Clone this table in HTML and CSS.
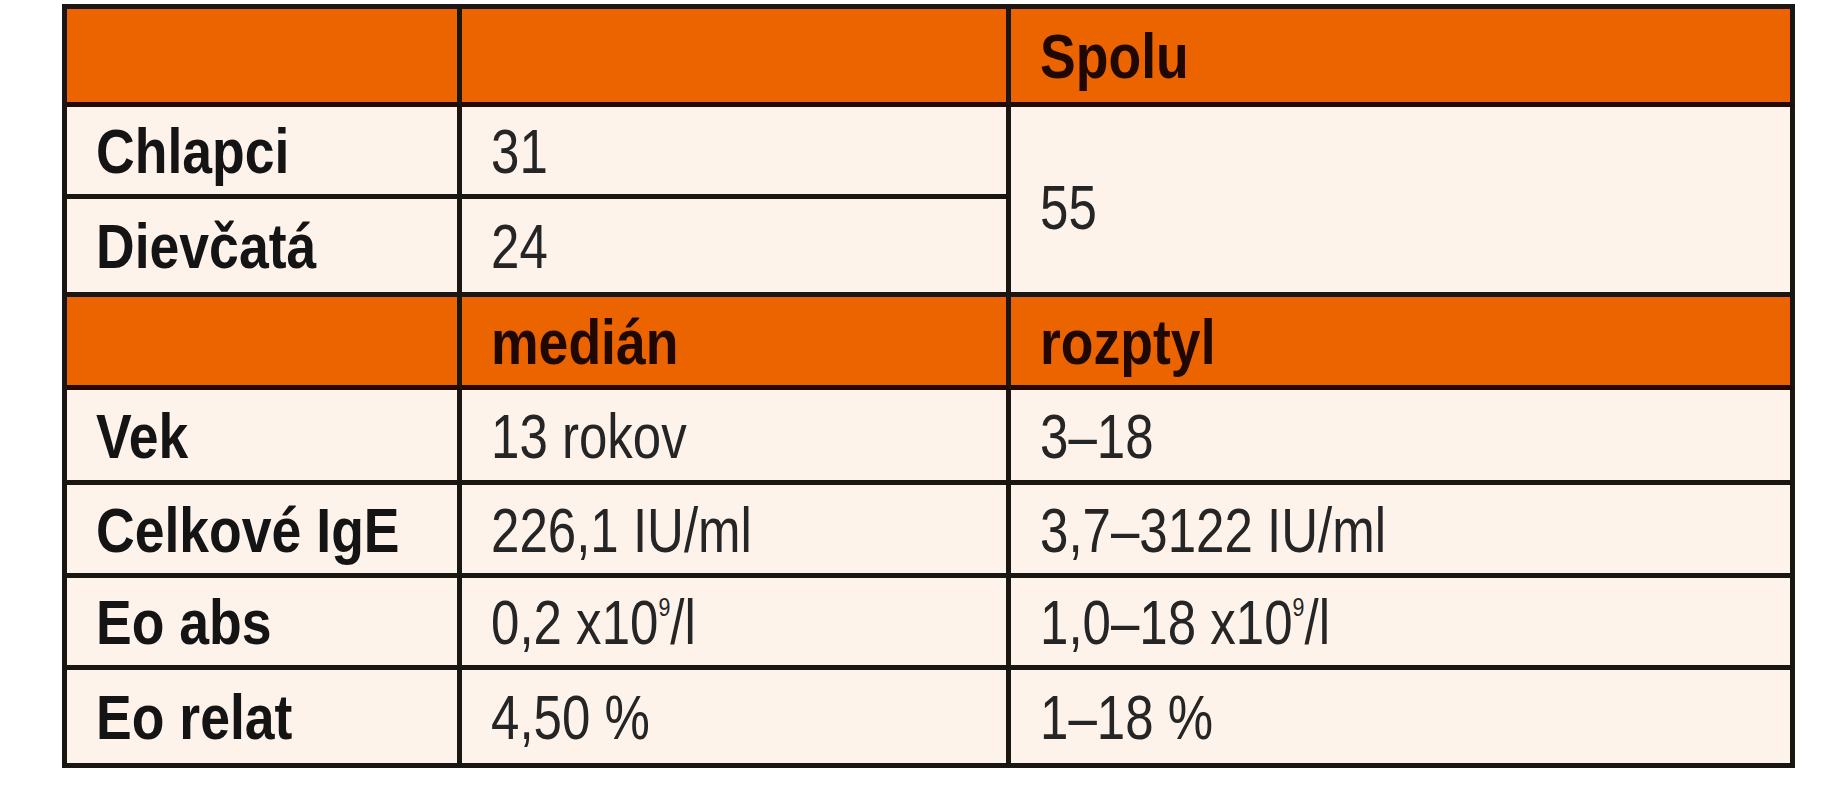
FILE: index.html
```html
<!DOCTYPE html>
<html lang="sk">
<head>
<meta charset="utf-8">
<title>Tabuľka</title>
<link rel="stylesheet" href="styles.css">
</head>
<body>
<table class="data">
  <colgroup>
    <col class="c1">
    <col class="c2">
    <col class="c3">
  </colgroup>
  <tbody>
    <tr class="head h94">
      <td></td>
      <td></td>
      <td><span class="t">Spolu</span></td>
    </tr>
    <tr class="h88">
      <th><span class="t">Chlapci</span></th>
      <td><span class="t">31</span></td>
      <td class="span" rowspan="2"><span class="t">55</span></td>
    </tr>
    <tr class="h94">
      <th><span class="t">Dievčatá</span></th>
      <td><span class="t">24</span></td>
    </tr>
    <tr class="head h89">
      <td></td>
      <td><span class="t">medián</span></td>
      <td><span class="t">rozptyl</span></td>
    </tr>
    <tr class="h91">
      <th><span class="t">Vek</span></th>
      <td><span class="t">13 rokov</span></td>
      <td><span class="t">3–18</span></td>
    </tr>
    <tr class="h89">
      <th><span class="t">Celkové IgE</span></th>
      <td><span class="t">226,1 IU/ml</span></td>
      <td><span class="t">3,7–3122 IU/ml</span></td>
    </tr>
    <tr class="h88">
      <th><span class="t">Eo abs</span></th>
      <td><span class="t">0,2 x10<sup>9</sup>/l</span></td>
      <td><span class="t">1,0–18 x10<sup>9</sup>/l</span></td>
    </tr>
    <tr class="h94">
      <th><span class="t">Eo relat</span></th>
      <td><span class="t">4,50 %</span></td>
      <td><span class="t">1–18 %</span></td>
    </tr>
  </tbody>
</table>
</body>
</html>
```

FILE: styles.css
```css
html, body {
  margin: 0;
  padding: 0;
  background: #ffffff;
}

body {
  padding: 4px 0 0 62px;
  font-family: "Liberation Sans", Arial, sans-serif;
  color: #1b1b1b;
}

.data {
  border-collapse: separate;
  border-spacing: 0;
  table-layout: fixed;
  width: 1733px;
  border-top: 5px solid #1a1612;
  border-left: 5px solid #1a1612;
  background: #fef3ea;
}

.c1 { width: 395px; }
.c2 { width: 549px; }
.c3 { width: 784px; }

.data th,
.data td {
  box-sizing: border-box;
  border-right: 5px solid #1a1612;
  border-bottom: 5px solid #1a1612;
  padding: 2px 0 0 29px;
  text-align: left;
  vertical-align: middle;
  font-size: 63px;
  line-height: 1;
  font-weight: 400;
  white-space: nowrap;
}

.t {
  display: inline-block;
  transform: scaleX(0.81);
  transform-origin: left center;
}

.data th {
  font-weight: 700;
  color: #141414;
}

.data th .t,
.head .t {
  transform: scaleX(0.85);
}

.data td {
  color: #252525;
}

.head td {
  background: #ec6400;
  font-weight: 700;
  color: #1e0800;
  border-bottom-color: #240a02;
}

.data .span {
  padding-top: 16px;
}

.h88 { height: 92px; }
.h89 { height: 93px; }
.h91 { height: 95px; }
.h94 { height: 98px; }

sup {
  font-size: 0.42em;
  vertical-align: 0;
  position: relative;
  top: -1.05em;
}
```
